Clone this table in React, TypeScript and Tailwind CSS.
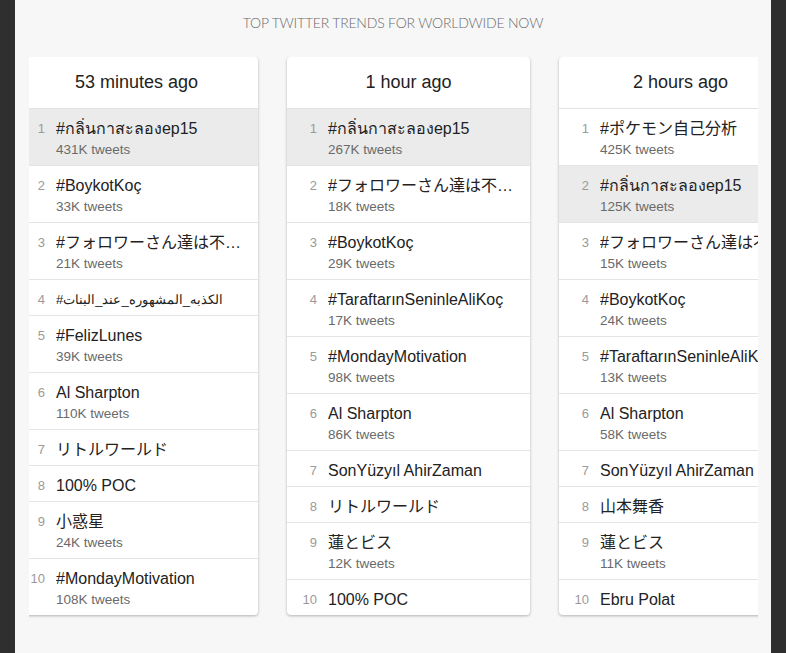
import React from 'react';

type Trend = {
  name: string;
  tweets?: string;
  rtl?: boolean;
};

type Column = {
  label: string;
  trends: Trend[];
};

const HIGHLIGHT = '#กลิ่นกาสะลองep15';

const columns: Column[] = [
  {
    label: '53 minutes ago',
    trends: [
      { name: '#กลิ่นกาสะลองep15', tweets: '431K tweets' },
      { name: '#BoykotKoç', tweets: '33K tweets' },
      { name: '#フォロワーさん達は不思議な仲間たち', tweets: '21K tweets' },
      { name: '#الكذبه_المشهوره_عند_البنات', rtl: true },
      { name: '#FelizLunes', tweets: '39K tweets' },
      { name: 'Al Sharpton', tweets: '110K tweets' },
      { name: 'リトルワールド' },
      { name: '100% POC' },
      { name: '小惑星', tweets: '24K tweets' },
      { name: '#MondayMotivation', tweets: '108K tweets' },
    ],
  },
  {
    label: '1 hour ago',
    trends: [
      { name: '#กลิ่นกาสะลองep15', tweets: '267K tweets' },
      { name: '#フォロワーさん達は不思議な仲間たち', tweets: '18K tweets' },
      { name: '#BoykotKoç', tweets: '29K tweets' },
      { name: '#TaraftarınSeninleAliKoç', tweets: '17K tweets' },
      { name: '#MondayMotivation', tweets: '98K tweets' },
      { name: 'Al Sharpton', tweets: '86K tweets' },
      { name: 'SonYüzyıl AhirZaman' },
      { name: 'リトルワールド' },
      { name: '蓮とビス', tweets: '12K tweets' },
      { name: '100% POC' },
    ],
  },
  {
    label: '2 hours ago',
    trends: [
      { name: '#ポケモン自己分析', tweets: '425K tweets' },
      { name: '#กลิ่นกาสะลองep15', tweets: '125K tweets' },
      { name: '#フォロワーさん達は不思議な仲間たち', tweets: '15K tweets' },
      { name: '#BoykotKoç', tweets: '24K tweets' },
      { name: '#TaraftarınSeninleAliKoç', tweets: '13K tweets' },
      { name: 'Al Sharpton', tweets: '58K tweets' },
      { name: 'SonYüzyıl AhirZaman' },
      { name: '山本舞香' },
      { name: '蓮とビス', tweets: '11K tweets' },
      { name: 'Ebru Polat' },
    ],
  },
];

const TrendCard: React.FC<{ column: Column }> = ({ column }) => {
  return (
    <div className="w-[243px] shrink-0 bg-white rounded-[4px] shadow-[0_1px_3px_rgba(0,0,0,0.28)] overflow-hidden">
      <div className="h-[52px] flex items-center justify-center text-[18px] text-[#222] border-b border-[#e2e2e2]">
        {column.label}
      </div>
      {column.trends.map((trend, i) => (
        <div
          key={i}
          className={`flex pt-[9px] ${trend.tweets ? 'pb-[6px]' : 'pb-[4px]'} ${
            i > 0 ? 'border-t border-[#e4e4e4]' : ''
          } ${trend.name === HIGHLIGHT ? 'bg-[#ebebeb]' : ''}`}
        >
          <div className="w-[30px] shrink-0 text-right text-[13px] leading-[22px] text-[#9a9a9a]">
            {i + 1}
          </div>
          <div className="ml-[11px] min-w-0 flex-1 pr-[14px]">
            {trend.rtl ? (
              <div className="text-[13px] leading-[22px] text-[#222] whitespace-nowrap">
                {trend.name}
              </div>
            ) : (
              <div className="text-[16px] leading-[22px] text-[#222] truncate">{trend.name}</div>
            )}
            {trend.tweets && (
              <div className="mt-[1px] text-[13.5px] leading-[18px] text-[#6a6a6a]">{trend.tweets}</div>
            )}
          </div>
        </div>
      ))}
    </div>
  );
};

export default function App() {
  return (
    <div
      className="flex w-[786px] h-[653px] bg-[#2f2f2f] overflow-hidden"
      style={{ fontFamily: '"Liberation Sans", Arial, "Noto Sans CJK JP", sans-serif' }}
    >
      <div className="w-[15px] shrink-0" />
      <div className="w-[756px] shrink-0 bg-[#f7f7f7]">
        <h1
          className="mt-[14px] text-center text-[14px] leading-[18px] font-light tracking-[-0.2px] text-[#6a6a6a]"
          style={{ fontFamily: 'Lato, "Liberation Sans", sans-serif' }}
        >
          TOP TWITTER TRENDS FOR WORLDWIDE NOW
        </h1>
        <div className="mt-[25px] ml-[14px] w-[729px] overflow-hidden pb-[6px]">
          <div className="flex items-start gap-[29px] -ml-[14px]">
            {columns.map((column) => (
              <TrendCard key={column.label} column={column} />
            ))}
          </div>
        </div>
      </div>
      <div className="w-[15px] shrink-0" />
    </div>
  );
}
